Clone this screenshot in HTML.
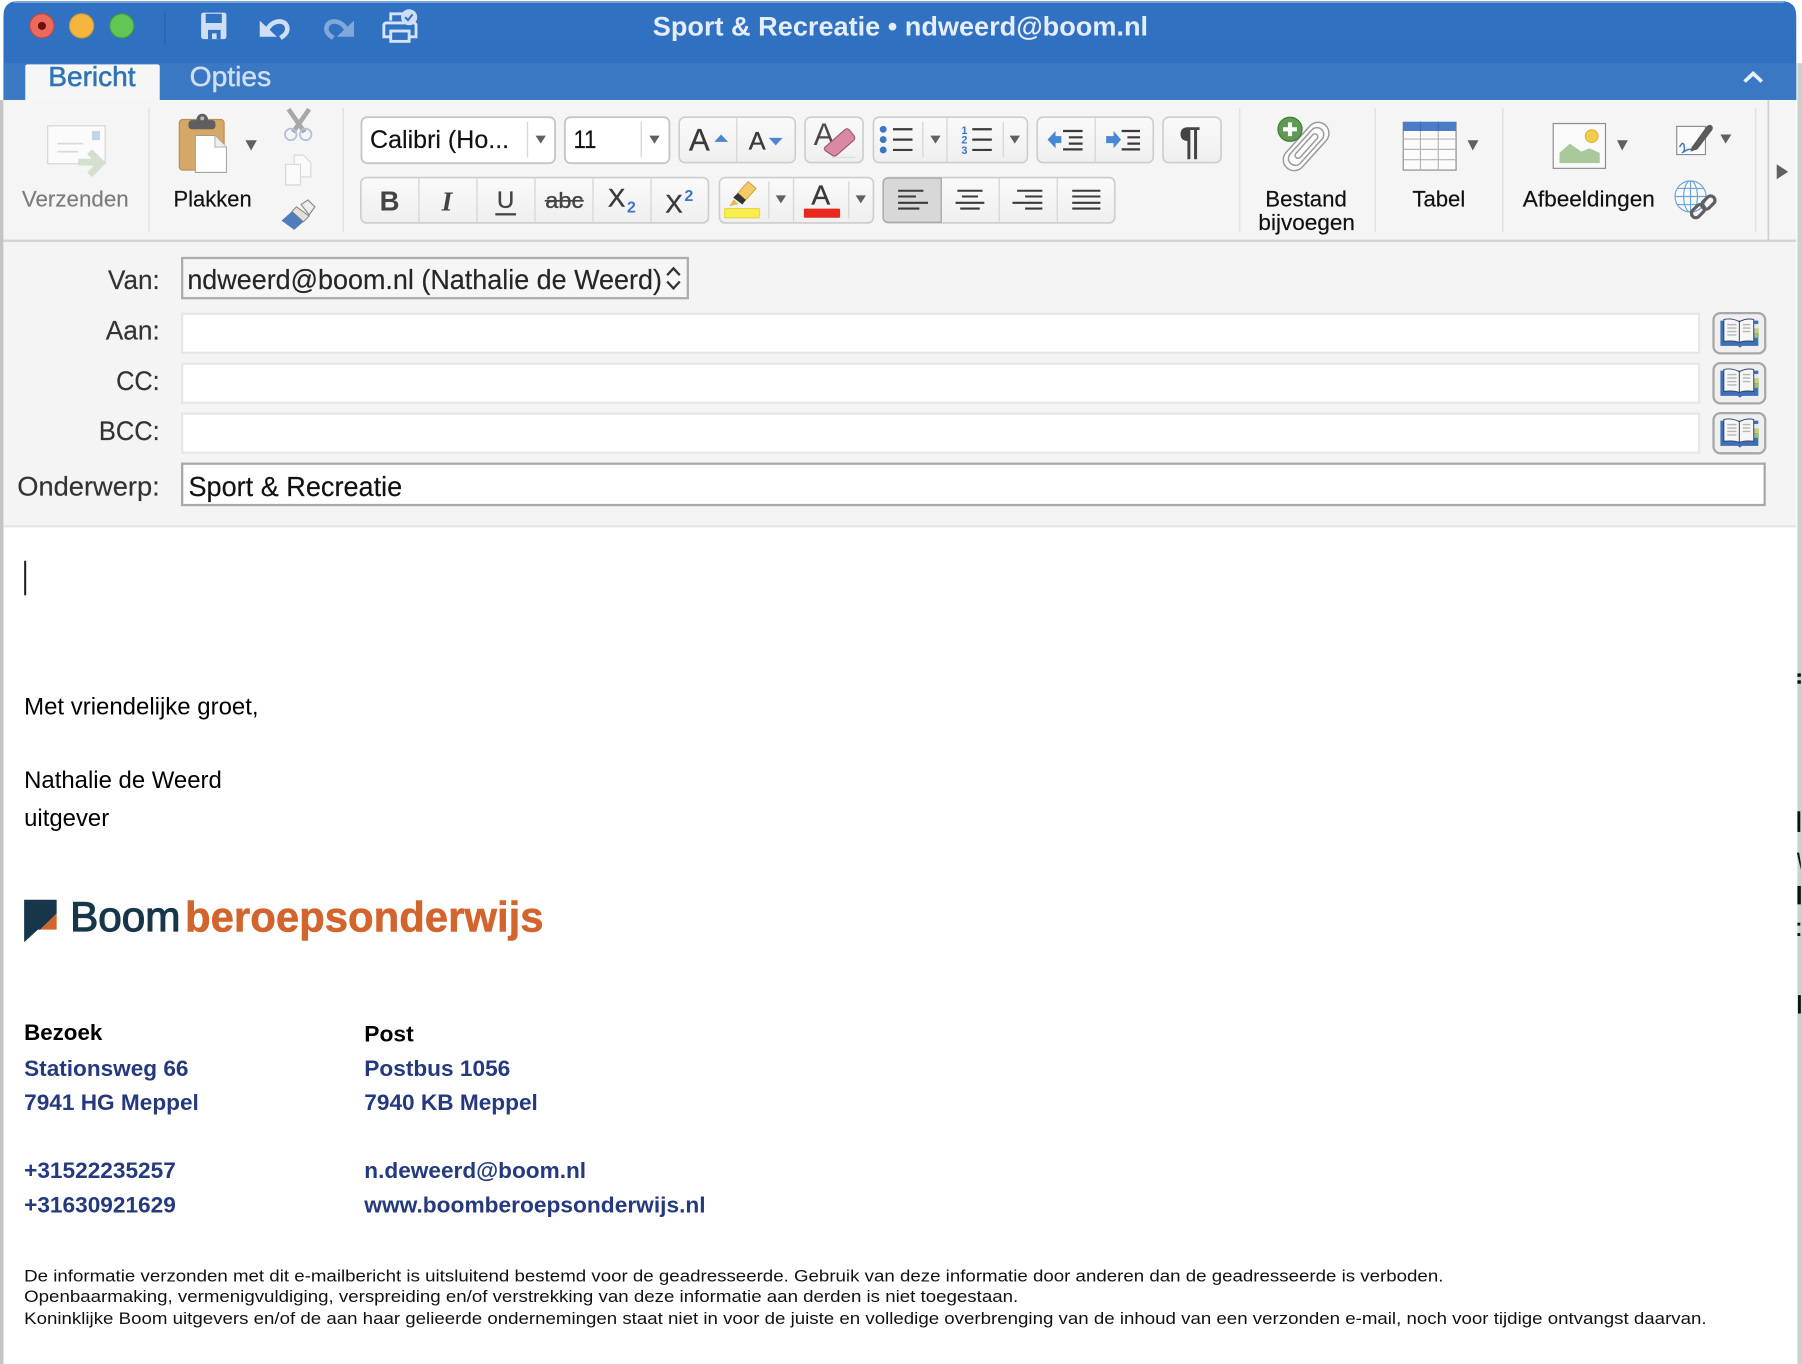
<!DOCTYPE html>
<html lang="nl"><head><meta charset="utf-8"><title>Sport &amp; Recreatie</title>
<style>
html,body{margin:0;padding:0;background:#fff;width:1802px;height:1364px;overflow:hidden}
svg{display:block}
text{font-family:"Liberation Sans",Arial,sans-serif}
.b{fill:url(#btn);stroke:#cdcdcd;stroke-width:1.4}
.d{stroke:#d8d8d8;stroke-width:1.2}
.l{stroke:#3a3a3a;stroke-width:2;fill:none}
.ar{fill:#606060}
.lab{font-size:23px;fill:#333;stroke:#333;stroke-width:.15}
.rib{font-size:19px;fill:#111;stroke:#111;stroke-width:.15}
.addr{font-size:19px;font-weight:bold;fill:#24397e}
.dis{font-size:14.6px;fill:#111}
.body{font-size:21px;fill:#000}
</style></head><body>
<svg xmlns="http://www.w3.org/2000/svg" width="1802" height="1364" viewBox="0 0 1568 1187" preserveAspectRatio="none">
<defs>
<linearGradient id="btn" x1="0" y1="0" x2="0" y2="1"><stop offset="0" stop-color="#fafafa"/><stop offset="1" stop-color="#efefef"/></linearGradient>
<linearGradient id="tb" x1="0" y1="0" x2="0" y2="1"><stop offset="0" stop-color="#3071c1"/><stop offset="1" stop-color="#3170c0"/></linearGradient>
<g id="book">
<path d="M0 2h33v22H19l-2 1.500-2-1.500H0z" fill="#3f6fb5"/>
<rect x="29" y="5" width="4.500" height="4" fill="#e8e8e8"/><rect x="29.500" y="9" width="4" height="4" fill="#c9cf7c"/><rect x="29.500" y="13" width="4" height="4" fill="#9fbd80"/>
<path d="M3 1C8 0 13 1 16.500 3V21C13 19.500 8 19.500 3 20z" fill="#f6f6f6" stroke="#26406a" stroke-width=".8"/>
<path d="M16.500 3C20 1 24 0 29 1V20C24 19.500 20 19.500 16.500 21z" fill="#f6f6f6" stroke="#26406a" stroke-width=".8"/>
<path d="M6 5.500h8M6 8.500h8M6 11.500h8M6 14.500h8M19.500 5.500h6.500M19.500 8.500h6.500M19.500 11.500h6.500" stroke="#b5b5b5" stroke-width="1.200"/>
</g>
</defs>
<rect width="1568" height="1187" fill="#fff"/>
<rect x="0" y="87" width="3" height="1100" fill="#c4c4c4"/>
<rect x="1564" y="55" width="4" height="1132" fill="#cfcfcf"/>
<!-- title bar -->
<path d="M3 87V14Q3 1 16 1H1550Q1563 1 1563 14V87z" fill="url(#tb)"/>
<rect x="12" y="1" width="1540" height="1.500" fill="#7fa9dd"/>
<rect x="3" y="55" width="1560" height="32" fill="#3b78c3"/>
<!-- ribbon + form -->
<rect x="3" y="87" width="1560" height="122" fill="#f6f5f5"/>
<rect x="3" y="209" width="1560" height="249" fill="#f4f4f4"/>
<rect x="3" y="208.500" width="1560" height="2" fill="#d2d2d2"/>
<rect x="3" y="457" width="1560" height="2" fill="#e6e6e6"/>
<!-- traffic lights -->
<circle cx="36.500" cy="22.500" r="10.500" fill="#ea6a5e" stroke="#c5473e" stroke-width="1"/><circle cx="36.500" cy="22.500" r="3.500" fill="#6e0f0a"/>
<circle cx="71" cy="22.500" r="10.500" fill="#f5b53f" stroke="#d69a2c" stroke-width="1"/>
<circle cx="106" cy="22.500" r="10.500" fill="#62c654" stroke="#3f9c3c" stroke-width="1"/>
<rect x="143" y="9" width="1" height="30" fill="#2a62a8"/>
<!-- save -->
<path d="M175 13a2 2 0 0 1 2-2h18a2 2 0 0 1 2 2v19a2 2 0 0 1-2 2h-18a2 2 0 0 1-2-2z" fill="#cfdff3"/>
<rect x="179" y="12" width="14" height="8" fill="#3071c1"/><path d="M181 34v-8h11v8h-3.500v-5h-4v5z" fill="#3071c1"/>
<!-- undo / redo -->
<polygon points="226,18 226,32 241,32" fill="#cfdff3"/>
<path d="M233 25C238 16 250 17 250 25C250 29 247 31 244 33" fill="none" stroke="#cfdff3" stroke-width="4"/>
<polygon points="308,18 308,32 293,32" fill="#80a8d8"/>
<path d="M301 25C296 16 284 17 284 25C284 29 287 31 290 33" fill="none" stroke="#80a8d8" stroke-width="4"/>
<!-- print -->
<path d="M340 18v-6h14v6M336 20h24a2 2 0 0 1 2 2v10h-6M340 32h-6V22a2 2 0 0 1 2-2" fill="none" stroke="#d5e3f5" stroke-width="2.500"/>
<rect x="340" y="27" width="16" height="9" fill="#3071c1" stroke="#d5e3f5" stroke-width="2.500"/>
<circle cx="356" cy="15" r="7" fill="#cfdff3"/><path d="M352.500 15l2.500 2.500 4-5" fill="none" stroke="#3071c1" stroke-width="1.800"/>
<!-- title -->
<text x="568" y="31" font-size="23" font-weight="bold" fill="#e4edf9" textLength="431" lengthAdjust="spacingAndGlyphs">Sport &amp; Recreatie • ndweerd@boom.nl</text>
<!-- tabs -->
<path d="M22 87V58q0-2 2-2H137q2 0 2 2V87z" fill="#f7f6f6"/>
<text x="42" y="75" font-size="24" fill="#2f75b5" stroke="#2f75b5" stroke-width=".5" textLength="76" lengthAdjust="spacingAndGlyphs">Bericht</text>
<text x="165" y="75" font-size="24" fill="#cfdff2" stroke="#cfdff2" stroke-width=".4" textLength="71" lengthAdjust="spacingAndGlyphs">Opties</text>
<path d="M1518 71l7.500-7 7.500 7" fill="none" stroke="#e8f0fb" stroke-width="3.200"/>
<!-- separators -->
<g fill="#e2e2e2"><rect x="129" y="94" width="1.300" height="108"/><rect x="298" y="94" width="1.300" height="108"/><rect x="1078" y="94" width="1.300" height="108"/><rect x="1196" y="94" width="1.300" height="108"/><rect x="1307" y="94" width="1.300" height="108"/><rect x="1527" y="94" width="1.300" height="108"/></g>
<rect x="1538" y="87" width="1.500" height="122" fill="#cfcfcf"/>
<polygon points="1546,143 1556,149.500 1546,156" fill="#606060"/>
<!-- verzenden icon -->
<rect x="41.500" y="109.500" width="50" height="33" fill="#fbfbfb" stroke="#d4d4d4"/>
<rect x="80" y="114" width="7" height="8" fill="#c4d3e6"/>
<path d="M50 125h22M50 132h18" stroke="#d8d8d8" stroke-width="1.500"/>
<path d="M68 141h16M78 132l10 10-10 10" fill="none" stroke="#d3e0cf" stroke-width="6"/>
<text x="19" y="179.500" class="rib" style="fill:#7d7d7d;stroke:#7d7d7d" textLength="93" lengthAdjust="spacingAndGlyphs">Verzenden</text>
<!-- paste -->
<rect x="156" y="104" width="39" height="44" rx="3" fill="#d5a867" stroke="#b98d50"/>
<rect x="164" y="104.500" width="23.500" height="8" rx="3" fill="#5f5f5f"/><circle cx="176" cy="104" r="5" fill="#5f5f5f"/><circle cx="176" cy="103" r="1.700" fill="#bbb"/>
<path d="M170 118h17l10 10v22h-27z" fill="#fff" stroke="#999" stroke-width=".8"/><path d="M187 118v10h10" fill="#eee" stroke="#aaa" stroke-width=".8"/>
<polygon points="213.500,122 223.500,122 218.500,131" class="ar"/>
<text x="151" y="179.500" class="rib" textLength="68" lengthAdjust="spacingAndGlyphs">Plakken</text>
<!-- scissors -->
<path d="M251 95l14 20M269 95l-14 20" stroke="#a8a8a8" stroke-width="4"/>
<circle cx="253" cy="117" r="5" fill="none" stroke="#b4c1dc" stroke-width="1.600"/><circle cx="266" cy="117" r="5" fill="none" stroke="#b4c1dc" stroke-width="1.600"/>
<!-- copy -->
<path d="M256 135h8l6.500 6.500V154h-14.500z" fill="#fafafa" stroke="#d8d8d8"/><path d="M248.500 143h13v18h-13z" fill="#fafafa" stroke="#d8d8d8"/>
<!-- brush -->
<path d="M262 178l6-4 6 6-5 7z" fill="#eee" stroke="#888" stroke-width="1"/>
<path d="M258 180l11 8-5 5-10-9z" fill="#e4e0d8" stroke="#777" stroke-width=".8"/>
<path d="M245 192l9-8 10 9-8 7z" fill="#4f7dbb"/>
<!-- font boxes -->
<rect x="314.500" y="102" width="168.500" height="40" rx="5" fill="#fff" stroke="#c6c6c6" stroke-width="1.600"/>
<rect x="491.500" y="102" width="91" height="40" rx="5" fill="#fff" stroke="#c6c6c6" stroke-width="1.600"/>
<line x1="459" y1="106" x2="459" y2="137" class="d"/><line x1="558" y1="106" x2="558" y2="137" class="d"/>
<polygon points="466,118 475,118 470.500,125" class="ar"/><polygon points="565,118 574,118 569.500,125" class="ar"/>
<text x="322" y="129" font-size="22" fill="#111" stroke="#111" stroke-width=".15" textLength="121" lengthAdjust="spacingAndGlyphs">Calibri (Ho...</text>
<text x="499" y="129" font-size="22" fill="#111" stroke="#111" stroke-width=".15" textLength="20" lengthAdjust="spacingAndGlyphs">11</text>
<!-- grow/shrink -->
<rect x="591" y="102" width="101" height="39.500" rx="5" class="b"/><line x1="641" y1="103" x2="641" y2="141" class="d"/>
<text x="599.500" y="131" font-size="27" fill="#3a3a3a" stroke="#3a3a3a" stroke-width=".3">A</text><polygon points="621.500,123.500 633.500,123.500 627.500,117" fill="#4c86d2"/>
<text x="651.500" y="130" font-size="22" fill="#3a3a3a" stroke="#3a3a3a" stroke-width=".3">A</text><polygon points="669,120 681,120 675,126.500" fill="#4c86d2"/>
<!-- eraser -->
<rect x="700.500" y="102" width="50.500" height="39.500" rx="5" class="b"/>
<text x="708" y="126" font-size="27" fill="#4a4a4a">A</text>
<path d="M718 128l17-15q2-2 4 0l4 5q1.500 2 0 4l-15 13q-2 1.500-4 0l-6-4q-1.500-2 0-3z" fill="#d98aa0" stroke="#9c5c70" stroke-width="1"/>
<path d="M724 137l20 0" stroke="#ddd" stroke-width="1.200"/>
<!-- lists -->
<rect x="760" y="102" width="134" height="39.500" rx="5" class="b"/><line x1="803" y1="106" x2="803" y2="137" class="d"/><line x1="824" y1="103" x2="824" y2="141" class="d"/><line x1="873" y1="106" x2="873" y2="137" class="d"/>
<g fill="#3c76c6"><circle cx="768.500" cy="112.500" r="3"/><circle cx="768.500" cy="121.500" r="3"/><circle cx="768.500" cy="130.500" r="3"/></g>
<path d="M777 112.500h17M777 121.500h17M777 130.500h17M846 112.500h17M846 121.500h17M846 130.500h17" class="l" style="stroke-width:1.900"/>
<polygon points="809.500,118 818.500,118 814,125" class="ar"/><polygon points="878.500,118 887.500,118 883,125" class="ar"/>
<g font-size="9.500" fill="#3c76c6" font-weight="bold"><text x="836.500" y="116.500">1</text><text x="836.500" y="125">2</text><text x="836.500" y="134">3</text></g>
<!-- indent -->
<rect x="902.500" y="102" width="101" height="39.500" rx="5" class="b"/><line x1="953" y1="103" x2="953" y2="141" class="d"/>
<path d="M911.500 121.500l7-7.500v4.500h5v6h-5v4.500z" fill="#4a86d6"/>
<path d="M925 114h17M930 119.500h12M930 125h12M925 130h17" class="l" style="stroke-width:1.900"/>
<path d="M975.500 121.500l-6.500-7.500v4.500h-6.500v6h6.500v4.500z" fill="#4a86d6"/>
<path d="M976 114h16M981 119.500h11M981 125h11M976 130h16" class="l" style="stroke-width:1.900"/>
<!-- pilcrow -->
<rect x="1012" y="102" width="50.500" height="39.500" rx="5" class="b"/>
<text x="1026" y="134" font-size="34" font-weight="bold" fill="#444">¶</text>
<!-- row 2 BIU -->
<rect x="314" y="154.500" width="302.500" height="39.500" rx="5" class="b"/>
<g class="d"><line x1="364.500" y1="155" x2="364.500" y2="193.500"/><line x1="415" y1="155" x2="415" y2="193.500"/><line x1="465.500" y1="155" x2="465.500" y2="193.500"/><line x1="516" y1="155" x2="516" y2="193.500"/><line x1="566.500" y1="155" x2="566.500" y2="193.500"/></g>
<text x="339" y="183" font-size="24" font-weight="bold" fill="#444" text-anchor="middle">B</text>
<text x="389" y="183" font-size="24" font-weight="bold" font-style="italic" fill="#444" text-anchor="middle" style="font-family:'Liberation Serif',serif">I</text>
<text x="440" y="181" font-size="21" fill="#444" text-anchor="middle" stroke="#444" stroke-width=".3">U</text><rect x="431" y="185.500" width="18" height="2" fill="#444"/>
<text x="491" y="181" font-size="19" fill="#444" stroke="#444" stroke-width=".3" text-anchor="middle" textLength="33" lengthAdjust="spacingAndGlyphs">abc</text><rect x="474" y="174" width="34" height="1.500" fill="#444"/>
<text x="529" y="179.500" font-size="22" fill="#3a3a3a" stroke="#3a3a3a" stroke-width=".4" textLength="15" lengthAdjust="spacingAndGlyphs">X</text><text x="545.500" y="185" font-size="14" fill="#3c76c6" font-weight="bold">2</text>
<text x="579" y="185" font-size="22" fill="#3a3a3a" stroke="#3a3a3a" stroke-width=".4" textLength="15" lengthAdjust="spacingAndGlyphs">X</text><text x="595.500" y="175" font-size="14" fill="#3c76c6" font-weight="bold">2</text>
<!-- colours -->
<rect x="626" y="154.500" width="134" height="39.500" rx="5" class="b"/><line x1="669" y1="158" x2="669" y2="190" class="d"/><line x1="690.500" y1="155" x2="690.500" y2="193.500" class="d"/><line x1="738.500" y1="158" x2="738.500" y2="190" class="d"/>
<path d="M642 168l9-10 7 6-9 10z" fill="#f4c966" stroke="#c99a3a" stroke-width=".7"/><path d="M638 172l4-4 7 6-3 4z" fill="#333"/><path d="M634.500 179.500l4-6 4 4z" fill="#e8b84c"/>
<rect x="630.500" y="181.500" width="30.500" height="8" rx="1" fill="#f9ee4e" stroke="#e4d94a"/>
<polygon points="675,170 684,170 679.500,177" class="ar"/>
<text x="706" y="178" font-size="24.500" fill="#3a3a3a" stroke="#3a3a3a" stroke-width=".3">A</text><rect x="699.500" y="181.500" width="31.500" height="8" rx="1" fill="#e6281e"/>
<polygon points="744.500,170 753.500,170 749,177" class="ar"/>
<!-- align -->
<rect x="768.500" y="154.500" width="201.500" height="39.500" rx="5" class="b"/>
<path d="M773 155h46v38.500h-46q-4.500 0-4.500-4.500v-29.500q0-4.500 4.500-4.500z" fill="#d8d8d8" stroke="#a8a8a8" stroke-width="1.200"/>
<g class="d"><line x1="869.500" y1="155" x2="869.500" y2="193.500"/><line x1="920" y1="155" x2="920" y2="193.500"/></g>
<path d="M781.500 166h22M781.500 171h15.500M781.500 176.500h26M781.500 181.500h18.500M833 166h22M837 171h14M831.500 176.500h25M835.500 181.500h17M885 166h22M892 171h15M881 176.500h26M892 181.500h15M933 166h24.500M933 171h24.500M933 176.500h24.500M933 181.500h24.500" stroke="#3a3a3a" stroke-width="1.800" fill="none"/>
<!-- attach -->
<g transform="translate(1136.500 127.500) rotate(42)" fill="none" stroke="#9a9a9a" stroke-width="1.300">
<rect x="-9.500" y="-25" width="19" height="50" rx="9.500" fill="#fdfdfd"/><rect x="-6" y="-20" width="12" height="40" rx="6"/><rect x="-2.500" y="-14" width="5" height="27" rx="2.500"/>
</g>
<circle cx="1122.500" cy="112.500" r="10.500" fill="#5f9a52" stroke="#3f7a39"/><path d="M1116.500 112.500h12M1122.500 106.500v12" stroke="#fff" stroke-width="3.600"/>
<text x="1101" y="179.500" class="rib" textLength="71" lengthAdjust="spacingAndGlyphs">Bestand</text>
<text x="1095" y="200" class="rib" textLength="84" lengthAdjust="spacingAndGlyphs">bijvoegen</text>
<!-- table -->
<rect x="1221" y="106.500" width="46" height="41.500" fill="#fbfbfb" stroke="#8a8a8a"/>
<rect x="1221" y="106" width="46" height="8" fill="#4b7cc5"/>
<path d="M1221 121h46M1221 130h46M1221 139h46M1236 114v34M1251.500 114v34" stroke="#b5b5b5"/>
<path d="M1236 106v8M1251.500 106v8" stroke="#3e6bb0"/>
<polygon points="1277,122 1286.500,122 1281.500,131" class="ar"/>
<text x="1229" y="179.500" class="rib" textLength="46" lengthAdjust="spacingAndGlyphs">Tabel</text>
<!-- image -->
<rect x="1351.500" y="107.500" width="45.500" height="39" fill="#fafafa" stroke="#8c8c8c"/>
<path d="M1357 142v-9l9-8 10 7 7-3 9 4v9z" fill="#a9c99b"/>
<circle cx="1385" cy="118.500" r="5.500" fill="#f2cc4e" stroke="#e3b23a"/>
<polygon points="1407,122 1416.500,122 1411.500,131" class="ar"/>
<text x="1325" y="179.500" class="rib" textLength="115" lengthAdjust="spacingAndGlyphs">Afbeeldingen</text>
<!-- signature -->
<rect x="1459" y="110" width="25" height="24.500" fill="#fbfbfb" stroke="#8c8c8c"/>
<path d="M1461.500 128q3-6 4-1t-2 6q5-3 6-3t3 0" fill="none" stroke="#3f76c4" stroke-width="1.300"/>
<path d="M1472 128l13-18q2-2 4-1t1 4l-13 17-6 2z" fill="#5a5a5a"/>
<polygon points="1497,117 1506.500,117 1501.500,125" class="ar"/>
<!-- globe/link -->
<g fill="none" stroke="#6fa3cf" stroke-width="1"><circle cx="1471" cy="171" r="13.500" fill="#f7fafc"/><ellipse cx="1471" cy="171" rx="6" ry="13.500"/><path d="M1457.500 171h27M1459.500 164h23M1459.500 178h23M1471 157.500v27"/></g>
<g fill="none" stroke="#5f5f5f" stroke-width="2.800"><rect x="1471" y="180" width="13" height="7.500" rx="3.700" transform="rotate(-45 1477.500 183.700)"/><rect x="1480" y="172.500" width="13" height="7.500" rx="3.700" transform="rotate(-45 1486.500 176.200)"/></g>
<!-- form -->
<text x="139" y="251.500" class="lab" text-anchor="end" textLength="45" lengthAdjust="spacingAndGlyphs">Van:</text>
<text x="139" y="295.500" class="lab" text-anchor="end" textLength="47" lengthAdjust="spacingAndGlyphs">Aan:</text>
<text x="139" y="339.500" class="lab" text-anchor="end" textLength="38" lengthAdjust="spacingAndGlyphs">CC:</text>
<text x="139" y="383" class="lab" text-anchor="end" textLength="53" lengthAdjust="spacingAndGlyphs">BCC:</text>
<text x="139" y="431" class="lab" text-anchor="end" textLength="124" lengthAdjust="spacingAndGlyphs">Onderwerp:</text>
<rect x="158.500" y="224.500" width="440" height="35" fill="#f6f6f6" stroke="#adadad" stroke-width="2"/>
<text x="163" y="251.500" font-size="24" fill="#262626" stroke="#262626" stroke-width=".15" textLength="413" lengthAdjust="spacingAndGlyphs">ndweerd@boom.nl (Nathalie de Weerd)</text>
<path d="M580.500 239.500l5.500-6 5.500 6M580.500 245l5.500 6 5.500-6" fill="none" stroke="#333" stroke-width="2"/>
<g fill="#fff" stroke="#e7e7e7" stroke-width="2"><rect x="158.500" y="273" width="1320" height="34"/><rect x="158.500" y="316.500" width="1320" height="34"/><rect x="158.500" y="360" width="1320" height="34"/></g>
<rect x="158.500" y="403.500" width="1377" height="36" fill="#fff" stroke="#a8a8a8" stroke-width="2"/>
<text x="164" y="431.500" font-size="24" fill="#111" stroke="#111" stroke-width=".15" textLength="186" lengthAdjust="spacingAndGlyphs">Sport &amp; Recreatie</text>
<g fill="#efefef" stroke="#a8a8a8" stroke-width="2"><rect x="1491" y="272.500" width="45" height="35" rx="6"/><rect x="1491" y="316" width="45" height="35" rx="6"/><rect x="1491" y="359.500" width="45" height="35" rx="6"/></g>
<use href="#book" x="1497" y="277"/><use href="#book" x="1497" y="320.500"/><use href="#book" x="1497" y="364"/>
<!-- body -->
<rect x="21" y="488" width="1.800" height="30" fill="#222"/>
<text x="21" y="621.700" class="body" textLength="204" lengthAdjust="spacingAndGlyphs">Met vriendelijke groet,</text>
<text x="21" y="685.700" class="body" textLength="172" lengthAdjust="spacingAndGlyphs">Nathalie de Weerd</text>
<text x="21" y="718.700" class="body" textLength="74" lengthAdjust="spacingAndGlyphs">uitgever</text>
<!-- logo -->
<polygon points="21,783 49.300,783 49.300,795 35,809 33,809 21,820" fill="#17364a"/>
<polygon points="49.300,795 49.300,809 35,809" fill="#d2652e"/>
<text x="61" y="810" font-size="36" fill="#17364a" stroke="#17364a" stroke-width="1" textLength="96" lengthAdjust="spacingAndGlyphs">Boom</text>
<text x="161" y="810.500" font-size="37" font-weight="bold" fill="#d2652e" stroke="#d2652e" stroke-width=".5" textLength="312" lengthAdjust="spacingAndGlyphs">beroepsonderwijs</text>
<!-- address -->
<text x="21" y="905" font-size="19" font-weight="bold" fill="#000" textLength="68" lengthAdjust="spacingAndGlyphs">Bezoek</text>
<text x="317" y="906.500" font-size="19" font-weight="bold" fill="#000" textLength="43" lengthAdjust="spacingAndGlyphs">Post</text>
<text x="21" y="936.500" class="addr" textLength="143" lengthAdjust="spacingAndGlyphs">Stationsweg 66</text>
<text x="21" y="966" class="addr" textLength="152" lengthAdjust="spacingAndGlyphs">7941 HG Meppel</text>
<text x="21" y="1025" class="addr" textLength="132" lengthAdjust="spacingAndGlyphs">+31522235257</text>
<text x="21" y="1055" class="addr" textLength="132" lengthAdjust="spacingAndGlyphs">+31630921629</text>
<text x="317" y="936.500" class="addr" textLength="127" lengthAdjust="spacingAndGlyphs">Postbus 1056</text>
<text x="317" y="966" class="addr" textLength="151" lengthAdjust="spacingAndGlyphs">7940 KB Meppel</text>
<text x="317" y="1025" class="addr" textLength="193" lengthAdjust="spacingAndGlyphs">n.deweerd@boom.nl</text>
<text x="317" y="1055" class="addr" textLength="297" lengthAdjust="spacingAndGlyphs">www.boomberoepsonderwijs.nl</text>
<!-- disclaimer -->
<text x="21" y="1115" class="dis" textLength="1235" lengthAdjust="spacingAndGlyphs">De informatie verzonden met dit e-mailbericht is uitsluitend bestemd voor de geadresseerde. Gebruik van deze informatie door anderen dan de geadresseerde is verboden.</text>
<text x="21" y="1133" class="dis" textLength="865" lengthAdjust="spacingAndGlyphs">Openbaarmaking, vermenigvuldiging, verspreiding en/of verstrekking van deze informatie aan derden is niet toegestaan.</text>
<text x="21" y="1152" class="dis" textLength="1464" lengthAdjust="spacingAndGlyphs">Koninklijke Boom uitgevers en/of de aan haar gelieerde ondernemingen staat niet in voor de juiste en volledige overbrenging van de inhoud van een verzonden e-mail, noch voor tijdige ontvangst daarvan.</text>
<!-- right edge fragments -->
<g fill="#111"><rect x="1564" y="586" width="3" height="3"/><rect x="1564" y="592" width="3" height="3"/><rect x="1564" y="706" width="2.500" height="18"/><path d="M1563.500 742l3.500 15v-6l-1.500-9z"/><rect x="1564" y="771" width="3" height="16"/><rect x="1564" y="803" width="2.500" height="2.500"/><rect x="1564" y="812" width="2.500" height="2.500"/><rect x="1564.500" y="866" width="2.500" height="16"/></g>
</svg>
</body></html>
